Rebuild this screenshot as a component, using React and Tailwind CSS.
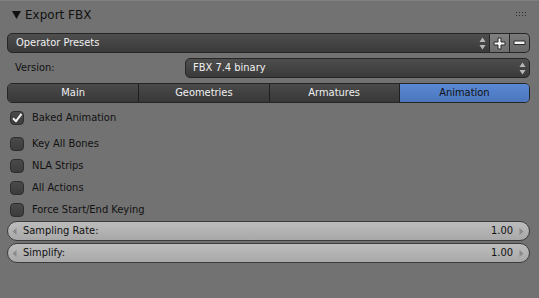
import React from 'react';

const font = { fontFamily: '"DejaVu Sans Condensed", "DejaVu Sans", "Liberation Sans", sans-serif' };
const headFont = { fontFamily: '"DejaVu Sans", "Liberation Sans", sans-serif' };

const UpDown = () => (
  <svg width="7" height="13" viewBox="0 0 7 13" className="shrink-0">
    <path d="M3.5 0.5 L6.5 5 L0.5 5 Z" fill="#b8b8b8" />
    <path d="M3.5 12.5 L6.5 8 L0.5 8 Z" fill="#b8b8b8" />
  </svg>
);

const Check = ({ checked, label }) => (
  <div className="flex items-center h-[22px]">
    <div className="ml-[3px] w-[14px] h-[14px] rounded-[4px] border border-[#2e2e2e] bg-gradient-to-b from-[#4a4a4a] to-[#3c3c3c] flex items-center justify-center">
      {checked && (
        <svg width="12" height="12" viewBox="0 0 12 12">
          <path d="M2 6.2 L5 9.2 L10.5 1.8" stroke="#f2f2f2" strokeWidth="2" fill="none" strokeLinejoin="round" />
        </svg>
      )}
    </div>
    <span className="ml-[8px] text-[#111]">{label}</span>
  </div>
);

const Slider = ({ label, value }) => (
  <div className="h-[20px] rounded-full border border-[#3c3c3c] bg-gradient-to-b from-[#bdbdbd] to-[#a8a8a8] flex items-center pl-[4px] pr-[5px] text-[#111]">
    <svg width="5" height="7" viewBox="0 0 5 7"><path d="M4.5 0 L0.5 3.5 L4.5 7 Z" fill="#8a8a8a" /></svg>
    <span className="ml-[6px]">{label}</span>
    <span className="ml-auto">{value}</span>
    <svg width="5" height="7" viewBox="0 0 5 7" className="ml-[6px]"><path d="M0.5 0 L4.5 3.5 L0.5 7 Z" fill="#8a8a8a" /></svg>
  </div>
);

const tabs = ['Main', 'Geometries', 'Armatures', 'Animation'];

export default function App() {
  return (
    <div className="w-[539px] h-[298px] bg-[#727272] text-[11px] border-t border-[#7f7f7f] overflow-hidden" style={font}>
      <div className="flex flex-col pl-[7px] pr-[9px]">
        <div className="h-[27px] flex items-center">
          <svg width="9" height="8" viewBox="0 0 9 8" className="ml-[5px]"><path d="M0 0 L9 0 L4.5 8 Z" fill="#111" /></svg>
          <span className="ml-[4px] text-[12px] text-[#111]" style={headFont}>Export FBX</span>
          <svg width="12" height="5" viewBox="0 0 12 5" className="ml-auto mr-[2px]">
            {[0, 3, 6, 9].map((x) => (
              <g key={x}>
                <rect x={x} y="0" width="1" height="1" fill="#2e2e2e" />
                <rect x={x} y="3" width="1" height="1" fill="#2e2e2e" />
              </g>
            ))}
          </svg>
        </div>

        <div className="mt-[5px] h-[20px] flex">
          <div className="flex-1 flex items-center rounded-l-[5px] border border-[#262626] bg-gradient-to-b from-[#4e4e4e] to-[#3a3a3a] pl-[8px] pr-[3px] text-[#f0f0f0]">
            <span>Operator Presets</span>
            <span className="ml-auto"><UpDown /></span>
          </div>
          <div className="w-[20px] flex items-center justify-center border-y border-r border-[#262626] bg-gradient-to-b from-[#808080] to-[#6e6e6e]">
            <svg width="13" height="13" viewBox="0 0 13 13">
              <path d="M5 1 H8 V5 H12 V8 H8 V12 H5 V8 H1 V5 H5 Z" fill="#f4f4f4" stroke="#2a2a2a" strokeWidth="1" />
            </svg>
          </div>
          <div className="w-[20px] flex items-center justify-center rounded-r-[5px] border-y border-r border-[#262626] bg-gradient-to-b from-[#7a7a7a] to-[#686868]">
            <svg width="13" height="6" viewBox="0 0 13 6">
              <path d="M1 1 H12 V4.5 H1 Z" fill="#f4f4f4" stroke="#2a2a2a" strokeWidth="1" />
            </svg>
          </div>
        </div>

        <div className="mt-[5px] h-[20px] flex items-center">
          <span className="ml-[8px] w-[170px] text-[#111]">Version:</span>
          <div className="flex-1 h-full flex items-center rounded-[5px] border border-[#262626] bg-gradient-to-b from-[#4e4e4e] to-[#3a3a3a] pl-[7px] pr-[3px] text-[#f0f0f0]">
            <span>FBX 7.4 binary</span>
            <span className="ml-auto"><UpDown /></span>
          </div>
        </div>

        <div className="mt-[5px] h-[20px] grid grid-cols-4 rounded-[5px] border border-[#262626] overflow-hidden">
          {tabs.map((t, i) => (
            <div
              key={t}
              className={
                i === 3
                  ? 'flex items-center justify-center bg-gradient-to-b from-[#5a88d4] to-[#4b76bd] text-[#111] border-l border-[#1e1e1e]'
                  : i === 0
                  ? 'flex items-center justify-center bg-gradient-to-b from-[#4a4a4a] to-[#383838] text-[#f0f0f0]'
                  : 'flex items-center justify-center bg-gradient-to-b from-[#4a4a4a] to-[#383838] text-[#f0f0f0] border-l border-[#1e1e1e]'
              }
            >
              {t}
            </div>
          ))}
        </div>

        <div className="mt-[4px]">
          <Check checked label="Baked Animation" />
        </div>
        <div className="mt-[4px] flex flex-col">
          <Check label="Key All Bones" />
          <Check label="NLA Strips" />
          <Check label="All Actions" />
          <Check label="Force Start/End Keying" />
        </div>

        <div className="mt-0 flex flex-col gap-[2px]">
          <Slider label="Sampling Rate:" value="1.00" />
          <Slider label="Simplify:" value="1.00" />
        </div>
      </div>
    </div>
  );
}
